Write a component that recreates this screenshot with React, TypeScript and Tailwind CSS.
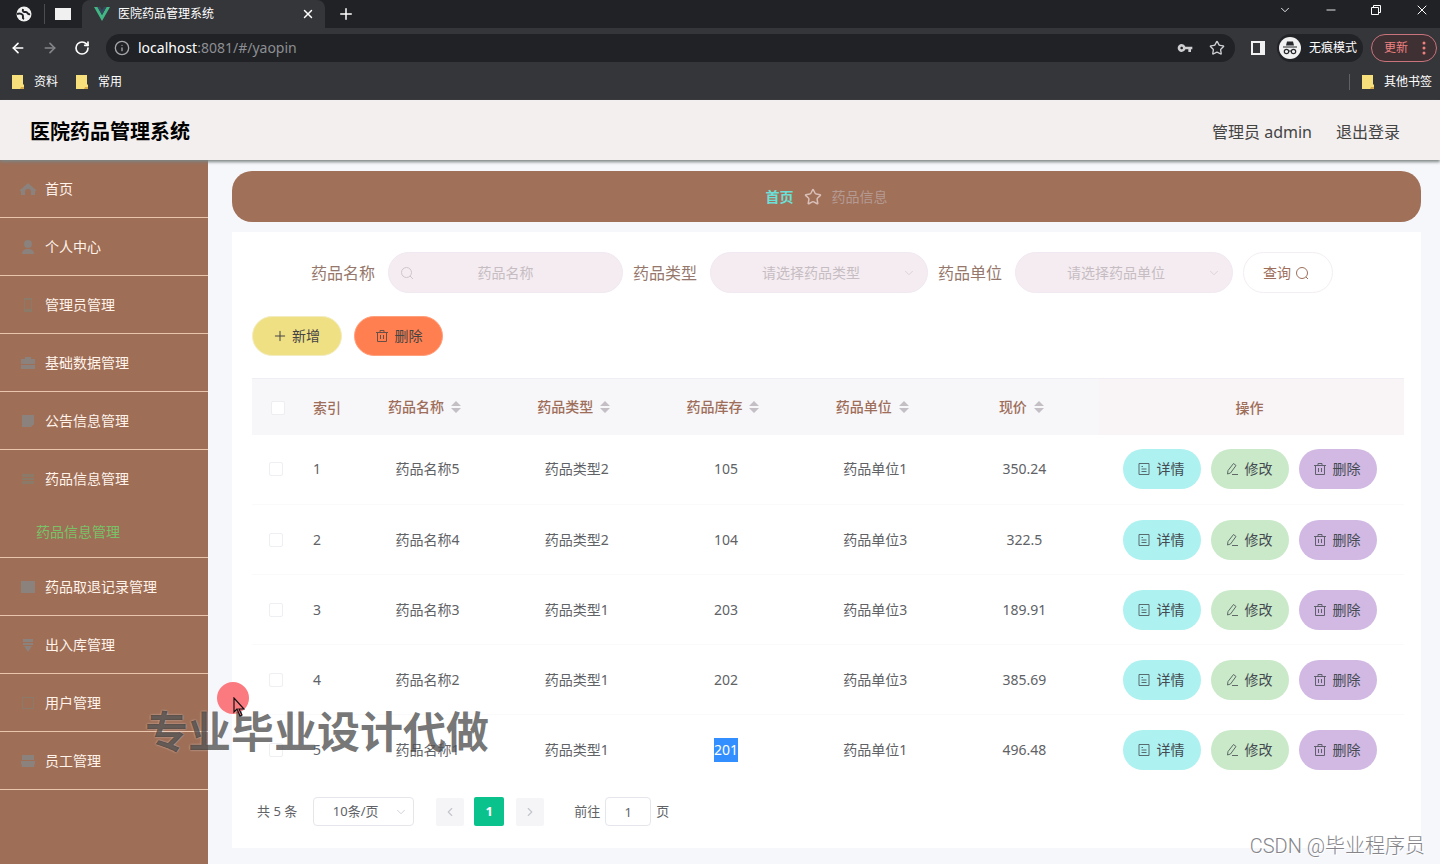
import type { ReactNode } from 'react';
import {
  ArrowLeft,
  ArrowRight,
  ChevronDown,
  ChevronLeft,
  ChevronRight,
  Info,
  Minus,
  Plus,
  RotateCw,
  Star,
  X,
} from 'lucide-react';
import { MdVpnKey } from 'react-icons/md';

type IconName =
  | 'home'
  | 'user'
  | 'phone'
  | 'case'
  | 'clip'
  | 'list'
  | 'square'
  | 'bulb'
  | 'frame'
  | 'goods';

interface MenuItem {
  label: string;
  icon: IconName;
  children?: string[];
}

const menu: MenuItem[] = [
  { label: '首页', icon: 'home' },
  { label: '个人中心', icon: 'user' },
  { label: '管理员管理', icon: 'phone' },
  { label: '基础数据管理', icon: 'case' },
  { label: '公告信息管理', icon: 'clip' },
  { label: '药品信息管理', icon: 'list', children: ['药品信息管理'] },
  { label: '药品取退记录管理', icon: 'square' },
  { label: '出入库管理', icon: 'bulb' },
  { label: '用户管理', icon: 'frame' },
  { label: '员工管理', icon: 'goods' },
];

const columns = ['药品名称', '药品类型', '药品库存', '药品单位', '现价'];

const rows = [
  { id: 1, name: '药品名称5', type: '药品类型2', stock: 105, unit: '药品单位1', price: '350.24' },
  { id: 2, name: '药品名称4', type: '药品类型2', stock: 104, unit: '药品单位3', price: '322.5' },
  { id: 3, name: '药品名称3', type: '药品类型1', stock: 203, unit: '药品单位3', price: '189.91' },
  { id: 4, name: '药品名称2', type: '药品类型1', stock: 202, unit: '药品单位3', price: '385.69' },
  { id: 5, name: '药品名称1', type: '药品类型1', stock: 201, unit: '药品单位1', price: '496.48' },
];

function MenuIcon({ name }: { name: IconName }) {
  const shapes: Record<IconName, ReactNode> = {
    home: <path d="M0 9 8 2l8 7v1h-1v4h-4v-3a3 3 0 0 0-6 0v3H1v-4H0z" />,
    user: <path d="M8 1a4 4 0 1 1 0 8 4 4 0 0 1 0-8zM2 15c0-3 2-5 6-5s6 2 6 5z" />,
    phone: <path d="M4 1h8v14H4zm1 2v9h6V3z" fillRule="evenodd" />,
    case: <path d="M5 2h6v2h4v5H1V4h4zM1 10h14v4H1z" />,
    clip: <path d="M2 2h12v9l-3 3H2z" />,
    list: <path d="M2 3h12v3H2zm0 4h12v2H2zm0 3h12v3H2z" />,
    square: <path d="M1 2h14v12H1z" />,
    bulb: <path d="M3 2h10v3H3zm0 4h10v2H3zm1 3h8l-4 6z" />,
    frame: <path d="M2 2h12v12H2zm1 1v10h10V3z" fillRule="evenodd" />,
    goods: <path d="M2 2h12v5H2zm-1 6h14v2l-1 4H2L1 10z" />,
  };
  const faint = name === 'phone' || name === 'frame' || name === 'list';
  return (
    <svg
      viewBox="0 0 16 16"
      className={faint ? 'h-4 w-4 fill-[#8b7a68]' : 'h-4 w-4 fill-[#8b817d]'}
      aria-hidden="true"
    >
      {shapes[name]}
    </svg>
  );
}

function DocIcon() {
  return (
    <svg viewBox="0 0 14 14" className="h-3.5 w-3.5 fill-none stroke-current opacity-80" aria-hidden="true">
      <path d="M2 1.5h10v11H2zM4.5 4.5H6M4.5 7h5M4.5 9.5h5" />
    </svg>
  );
}

function EditIcon() {
  return (
    <svg viewBox="0 0 14 14" className="h-3.5 w-3.5 fill-none stroke-current opacity-80" aria-hidden="true">
      <path d="M8.5 1.5 11 3.500 5.500 11l-3 1 .5-3.500zM7 12.500h6" />
    </svg>
  );
}

function TrashIcon() {
  return (
    <svg viewBox="0 0 14 14" className="h-3.5 w-3.5 fill-none stroke-current opacity-80" aria-hidden="true">
      <path d="M1 3.5h12M2.5 3.5v9h9v-9M5 3.5v-2h4v2M5.5 6v4M8.5 6v4" />
    </svg>
  );
}

function SortIcon() {
  return (
    <svg viewBox="0 0 10 12" className="h-3 w-2.5 fill-[#c3bfc4]" aria-hidden="true">
      <path d="M5 0l5 5H0zM0 7h10l-5 5z" />
    </svg>
  );
}

function FolderIcon() {
  return (
    <svg viewBox="0 0 12 14" className="h-3.5 w-3" aria-hidden="true">
      <path d="M0 0h11v9l1 1v4H0z" fill="#f7e07c" />
      <path d="M9 12h3v2H8z" fill="#d9a945" />
    </svg>
  );
}

function BrowserChrome() {
  return (
    <div className="bg-[#35363a] text-xs text-white">
      <div className="flex h-7 items-center bg-[#202226]">
        <div className="flex h-7 w-[82px] shrink-0 items-center gap-3 pl-4">
          <svg viewBox="0 0 16 16" className="h-4 w-4" aria-hidden="true">
            <circle cx="8" cy="8" r="7.5" fill="#f1f1f1" />
            <path d="M1 8c3-1 6 0 6 2 0 1-1 2 1 3M7 3c-1 3 1 3 3 3s1 3 4 2" fill="none" stroke="#202226" strokeWidth="2" />
          </svg>
          <span className="h-5 w-px bg-[#4b4c50]" />
          <span className="-ml-0.5 h-3 w-4 bg-[#f0f0f0]" />
        </div>
        <div className="flex h-7 w-[243px] items-center rounded-t-lg bg-[#35363a] pl-3">
          <svg viewBox="0 0 16 14" className="h-3.5 w-4" aria-hidden="true">
            <path d="M0 0h3.500L8 8l4.500-8H16L8 14z" fill="#41b883" />
            <path d="M3.500 0H6l2 3.500L10 0h2.500L8 8z" fill="#34495e" />
          </svg>
          <span className="ml-2 flex-1">医院药品管理系统</span>
          <button aria-label="关闭标签页" className="mr-2.5">
            <X className="h-3.5 w-3.5" strokeWidth={2.5} />
          </button>
        </div>
        <button aria-label="新标签页" className="ml-3">
          <Plus className="h-[18px] w-[18px]" />
        </button>
        <div className="ml-auto flex h-5 items-center gap-8 self-start pr-2.5">
          <ChevronDown className="h-3.5 w-3.5" strokeWidth={1.5} />
          <Minus className="h-3.5 w-3.5" strokeWidth={1.5} />
          <svg viewBox="0 0 12 12" className="h-3 w-3 fill-none stroke-current" aria-hidden="true">
            <path d="M1.5 3.5h7v7h-7zM3.5 3.5v-2h7v7h-2" />
          </svg>
          <X className="h-4 w-4" strokeWidth={1.5} />
        </div>
      </div>
      <div className="flex h-10 items-center pr-[3px] pl-2.5">
        <div className="flex gap-4">
          <ArrowLeft className="h-4 w-4" strokeWidth={2.5} />
          <ArrowRight className="h-4 w-4 text-[#85868a]" strokeWidth={2.5} />
          <RotateCw className="h-4 w-4" strokeWidth={2.5} />
        </div>
        <div className="ml-4 flex h-7 flex-1 items-center rounded-full bg-[#202226] pr-2.5 pl-2 text-sm">
          <Info className="h-4 w-4 text-[#a5a6a9]" />
          <span className="ml-2">
            localhost<span className="text-[#8d8e92]">:8081/#/yaopin</span>
          </span>
          <MdVpnKey className="ml-auto h-4 w-4 text-[#cfcfd1]" />
          <Star className="ml-4 h-4 w-4 text-[#cfcfd1]" />
        </div>
        <svg viewBox="0 0 14 14" className="ml-4 h-3.5 w-3.5" aria-hidden="true">
          <path d="M1 1h12v12H1z" fill="none" stroke="#f1f1f1" strokeWidth="2" />
          <path d="M9 1h4v12H9z" fill="#f1f1f1" />
        </svg>
        <div className="ml-3 flex h-7 items-center gap-2 rounded-full bg-[#222327] pr-1.5 pl-0.5">
          <svg viewBox="0 0 22 22" className="h-[22px] w-[22px]" aria-hidden="true">
            <circle cx="11" cy="11" r="11" fill="#f1f1f1" />
            <path d="M8 4.500h6l1 4H7zM4 9.500h14v1H4z" fill="#27282c" />
            <circle cx="7.500" cy="14.500" r="2.200" fill="none" stroke="#27282c" strokeWidth="1.200" />
            <circle cx="14.500" cy="14.500" r="2.200" fill="none" stroke="#27282c" strokeWidth="1.200" />
            <path d="M9.500 14h3" stroke="#27282c" />
          </svg>
          <span>无痕模式</span>
        </div>
        <button className="ml-2 flex h-7 w-[66px] items-center rounded-full border border-[#c9737c] bg-[#3f3034] pl-3 text-[#ee8080]">
          更新
          <svg viewBox="0 0 4 14" className="ml-3.5 h-3.5 w-1 fill-current" aria-hidden="true">
            <circle cx="2" cy="2" r="1.5" />
            <circle cx="2" cy="7" r="1.5" />
            <circle cx="2" cy="12" r="1.5" />
          </svg>
        </button>
      </div>
      <div className="flex h-8 items-start pt-1 pr-2 pl-3">
        <div className="flex flex-1 items-center gap-[18px]">
          <a href="#ziliao" className="flex items-center gap-2.5 leading-5">
            <FolderIcon />
            资料
          </a>
          <a href="#changyong" className="flex items-center gap-2.5 leading-5">
            <FolderIcon />
            常用
          </a>
        </div>
        <span className="mt-0.5 mr-3 h-4 w-px bg-[#606165]" />
        <a href="#other" className="flex items-center gap-2.5 leading-5">
          <FolderIcon />
          其他书签
        </a>
      </div>
    </div>
  );
}

function Sidebar() {
  return (
    <nav className="w-52 shrink-0 bg-[#9e6e57] text-sm text-[#fff3ea]">
      <ul>
        {menu.map((item) => (
          <li key={item.label} className="border-b border-[#e9c5ae]">
            <a href="#menu" className="flex h-[57px] items-center gap-[9px] pl-5">
              <MenuIcon name={item.icon} />
              {item.label}
            </a>
            {item.children?.map((child) => (
              <a key={child} href="#/yaopin" className="flex h-[50px] items-center pl-9 text-[#79c267]">
                {child}
              </a>
            ))}
          </li>
        ))}
      </ul>
    </nav>
  );
}

function FilterSelect({ id, label, placeholder }: { id: string; label: string; placeholder: string }) {
  return (
    <div className="flex items-center">
      <label htmlFor={id} className="mr-[13px] text-base text-[#96776b]">
        {label}
      </label>
      <div className="relative">
        <select
          id={id}
          className="h-[41px] w-[218px] appearance-none rounded-full border border-[#f0e9f1] bg-[#f5ecf1] pr-4 text-center text-sm text-[#c6bdc3]"
        >
          <option>{placeholder}</option>
        </select>
        <ChevronDown className="pointer-events-none absolute top-3.5 right-3 h-3.5 w-3.5 text-[#d8ced5]" strokeWidth={1.5} />
      </div>
    </div>
  );
}

function Filters() {
  return (
    <form className="flex items-center justify-center gap-2.5 pr-3">
      <div className="flex items-center">
        <label htmlFor="name" className="mr-[13px] text-base text-[#96776b]">
          药品名称
        </label>
        <div className="relative">
          <input
            id="name"
            placeholder="药品名称"
            className="h-[41px] w-[235px] rounded-full border border-[#f0e9f1] bg-[#f5ecf1] text-center text-sm placeholder:text-[#c6bdc3]"
          />
          <svg viewBox="0 0 14 14" className="absolute top-3.5 left-3 h-3.5 w-3.5 fill-none stroke-[#cfc5cc]" aria-hidden="true">
            <circle cx="6.5" cy="6.5" r="5" />
            <path d="m10 10 3 3" />
          </svg>
        </div>
      </div>
      <FilterSelect id="type" label="药品类型" placeholder="请选择药品类型" />
      <FilterSelect id="unit" label="药品单位" placeholder="请选择药品单位" />
      <button
        type="button"
        className="flex h-[41px] w-[90px] items-center justify-center gap-1 rounded-full border border-[#f3eef3] bg-white pr-1 text-sm text-[#9e6e5a]"
      >
        查询
        <svg viewBox="0 0 14 14" className="h-3.5 w-3.5 fill-none stroke-current" aria-hidden="true">
          <circle cx="7" cy="7" r="5.5" />
          <path d="m11 11 2 2" />
        </svg>
      </button>
    </form>
  );
}

function DrugTable() {
  const action = 'flex h-10 w-[78px] items-center justify-center gap-1.5 rounded-full pr-0.5 text-[#444a50]';
  return (
    <table className="mt-[22px] w-full table-fixed text-sm text-[#606266]">
      <colgroup>
        <col className="w-[50px]" />
        <col className="w-[51px]" />
        {columns.map((c) => (
          <col key={c} />
        ))}
        <col className="w-[305px]" />
      </colgroup>
      <thead>
        <tr className="h-14 border-t border-[#f0eef4] bg-[#f7f6f8] text-[#9e6e5a]">
          <th className="pt-0.5 pl-[19px] text-left align-middle">
            <input
              type="checkbox"
              aria-label="全选"
              className="block h-3.5 w-3.5 appearance-none rounded-xs border border-[#eeeef0] bg-white"
            />
          </th>
          <th className="pt-0.5 pl-[11px] text-left font-medium">索引</th>
          {columns.map((c) => (
            <th key={c} className="font-medium">
              <span className="inline-flex items-center gap-[7px] pr-1.5">
                {c}
                <SortIcon />
              </span>
            </th>
          ))}
          <th className="bg-[#f9f4f6] pt-0.5 pr-1 font-medium">操作</th>
        </tr>
      </thead>
      <tbody>
        {rows.map((row) => (
          <tr key={row.id} className="h-[70px] border-b border-[#fafafc] text-center last:border-transparent">
            <td className="pl-[17px]">
              <input
                type="checkbox"
                aria-label={`选择 ${row.name}`}
                className="block h-3.5 w-3.5 appearance-none rounded-xs border border-[#eeeff2] bg-white"
              />
            </td>
            <td className="pl-[11px] text-left">{row.id}</td>
            <td>{row.name}</td>
            <td>{row.type}</td>
            <td>
              {row.id === 5 ? <span className="inline-block bg-[#338fff] leading-6 text-white">{row.stock}</span> : row.stock}
            </td>
            <td>{row.unit}</td>
            <td>{row.price}</td>
            <td>
              <div className="flex justify-center gap-2.5 pr-1">
                <button className={`${action} bg-[#adf1f0]`}>
                  <DocIcon />
                  详情
                </button>
                <button className={`${action} bg-[#c9e9c9]`}>
                  <EditIcon />
                  修改
                </button>
                <button className={`${action} bg-[#d1b9e4]`}>
                  <TrashIcon />
                  删除
                </button>
              </div>
            </td>
          </tr>
        ))}
      </tbody>
    </table>
  );
}

function Pagination() {
  return (
    <div className="mt-3 flex h-[29px] items-center pl-[5px] text-[13px] text-[#606266]">
      <span>共 5 条</span>
      <div className="relative ml-4">
        <select
          aria-label="每页条数"
          className="h-[29px] w-[101px] appearance-none rounded-sm border border-[#e4e6ec] bg-white pr-4 text-center"
        >
          <option>10条/页</option>
        </select>
        <ChevronDown className="pointer-events-none absolute top-2 right-1.5 h-3.5 w-3.5 text-[#c9ccd3]" strokeWidth={1.5} />
      </div>
      <button aria-label="上一页" className="ml-[22px] flex h-7 w-7 items-center justify-center rounded-xs bg-[#f5f5f7] text-[#c3c6cd]">
        <ChevronLeft className="h-3.5 w-3.5" />
      </button>
      <button className="ml-2.5 h-[29px] w-[30px] rounded-xs bg-[#0ac28c] font-bold text-white">1</button>
      <button aria-label="下一页" className="ml-3 flex h-7 w-7 items-center justify-center rounded-xs bg-[#f5f5f7] text-[#c3c6cd]">
        <ChevronRight className="h-3.5 w-3.5" />
      </button>
      <label htmlFor="jump" className="ml-[30px]">
        前往
      </label>
      <input id="jump" defaultValue="1" className="mx-[5px] h-[29px] w-[46px] rounded-sm border border-[#e4e6ec] bg-white text-center" />
      <span>页</span>
    </div>
  );
}

export default function App() {
  return (
    <div className="relative flex min-h-screen flex-col overflow-hidden bg-[#f6f7fa] font-['Noto_Sans','Noto_Sans_CJK_SC',sans-serif]">
      <BrowserChrome />
      <header className="relative z-10 flex h-[60px] items-center justify-between bg-[#f3efee] pt-1 pr-10 pl-[30px] shadow-[0_2px_3px_#7d8584]">
        <h1 className="text-xl font-bold text-black">医院药品管理系统</h1>
        <div className="flex gap-6 text-base text-[#444]">
          <span>管理员 admin</span>
          <a href="#logout">退出登录</a>
        </div>
      </header>
      <div className="flex flex-1">
        <Sidebar />
        <main className="min-w-0 flex-1 pt-[11px] pr-[19px] pb-4 pl-6">
          <div className="flex h-[51px] items-center justify-center gap-2.5 rounded-[20px] bg-[#a07059] text-sm">
            <a href="#/" className="font-bold text-[#6be0d8]">
              首页
            </a>
            <Star className="h-[18px] w-[18px] text-[#d9bfb8]" />
            <span className="text-[#b59a92]">药品信息</span>
          </div>
          <section className="mt-2.5 bg-white pt-5 pr-[17px] pb-[22px] pl-5">
            <Filters />
            <div className="mt-[23px] flex gap-3 text-sm text-[#444]">
              <button className="flex h-10 w-[90px] items-center justify-center gap-1 rounded-full border border-[#f3ecc0] bg-[#f0e084] pr-0.5">
                <Plus className="h-4 w-4" strokeWidth={1.5} />
                新增
              </button>
              <button className="flex h-10 w-[89px] items-center justify-center gap-1.5 rounded-full border border-[#ffa07c] bg-[#ff7f50]">
                <TrashIcon />
                删除
              </button>
            </div>
            <DrugTable />
            <Pagination />
          </section>
        </main>
      </div>

      {/* overlays: click highlight, pointer, watermarks */}
      <div className="pointer-events-none absolute top-[682px] left-[217px] z-20 h-8 w-8 rounded-full bg-[#fb7a80]" />
      <div className="pointer-events-none absolute top-[704px] left-[145px] z-20 text-[43px] leading-[56px] font-bold whitespace-nowrap text-black/55 [text-shadow:0_0_2px_#ffffff99]">
        专业毕业设计代做
      </div>
      <svg viewBox="0 0 12 20" className="pointer-events-none absolute top-[697px] left-[233px] z-30 h-5 w-3" aria-hidden="true">
        <path d="M1 1v14l3-3 3 7 2-1-3-6h5z" fill="#fb7a80" stroke="#111" strokeWidth="1.200" />
      </svg>
      <div className="pointer-events-none absolute right-[15px] bottom-1 z-20 font-['Roboto','Noto_Sans_CJK_SC',sans-serif] text-xl font-light text-[#85858a] [text-shadow:1px_1px_0_#fff]">
        CSDN @毕业程序员
      </div>
    </div>
  );
}
